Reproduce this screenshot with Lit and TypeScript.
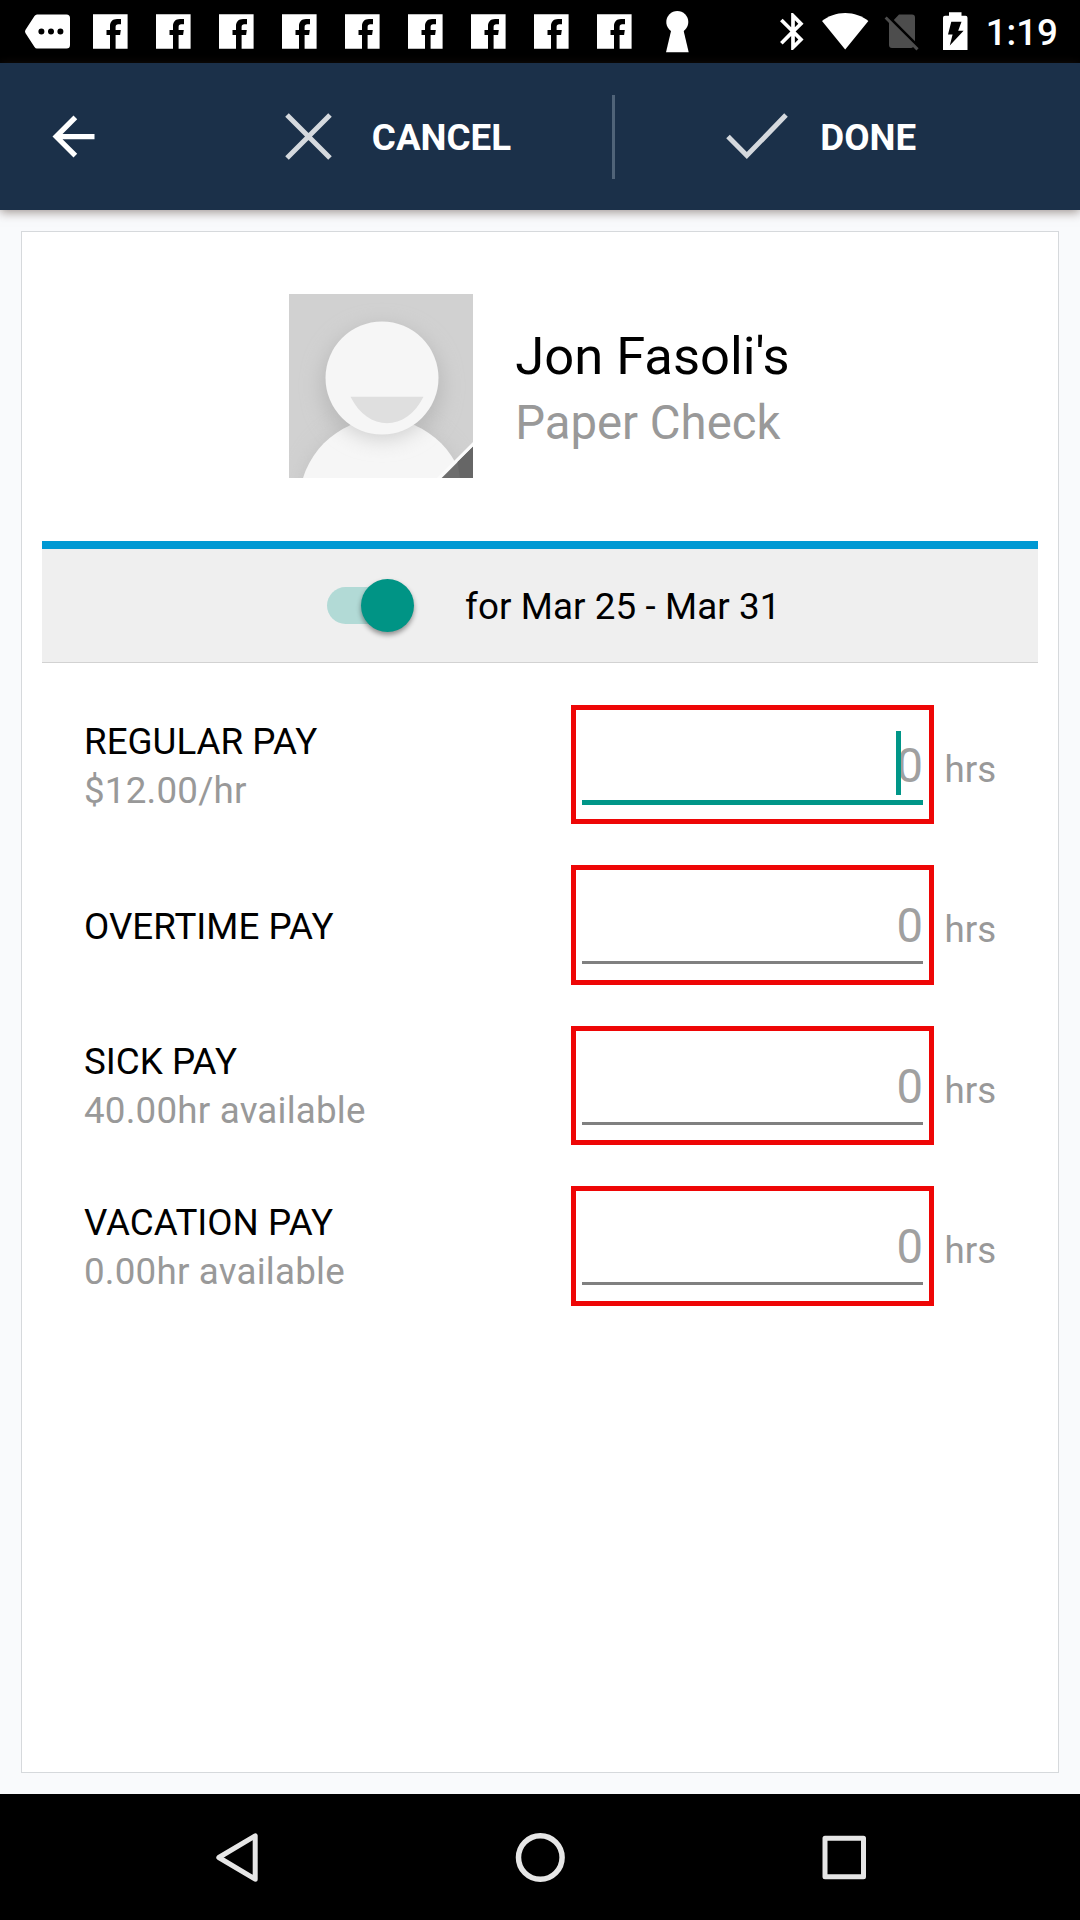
import { LitElement, html, css, svg, nothing } from "lit";
import { customElement, property } from "lit/decorators.js";

interface PayLine {
  label: string;
  note?: string;
  focused?: boolean;
}

const LINES: PayLine[] = [
  { label: "REGULAR PAY", note: "$12.00/hr", focused: true },
  { label: "OVERTIME PAY" },
  { label: "SICK PAY", note: "40.00hr available" },
  { label: "VACATION PAY", note: "0.00hr available" },
];

@customElement("status-bar")
class StatusBar extends LitElement {
  static styles = css`
    :host {
      display: flex;
      justify-content: space-between;
      height: 63px;
      background: #000;
      color: #fff;
    }
    .group {
      display: flex;
    }
    .notices {
      padding-left: 16px;
    }
    .system {
      padding-right: 22px;
    }
    svg {
      display: block;
      height: 63px;
      fill: #fff;
    }
    .time {
      margin-left: 8px;
      font: 500 36.75px/63px Roboto, sans-serif;
      padding-top: 1px;
      height: 62px;
    }
  `;

  render() {
    const social = html`<svg width="63" viewBox="0 0 63 63">
      <path
        fill-rule="evenodd"
        d="M14 14.2H48.6V48.8H36.6V35H41.1L41.8 30H36.6V27C36.6 25 37.5 24.2 39.3 24.2H42V19H38C33.5 19 31 21.8 31 26V30H27.5V35H31V48.8H14Z"
      />
    </svg>`;
    return html`
      <div class="group notices">
        <svg width="63" viewBox="16 0 63 63">
          <path
            fill-rule="evenodd"
            d="M37 14.5H66.5Q70 14.5 70 18V45Q70 48.5 66.5 48.5H37Q35.5 48.5 34.5 47L25.4 33Q24.6 31.5 25.4 30L34.5 16Q35.5 14.5 37 14.5ZM38.4 31.5a3 3 0 1 0 6 0a3 3 0 1 0-6 0ZM48 31.5a3 3 0 1 0 6 0a3 3 0 1 0-6 0ZM57.4 31.5a3 3 0 1 0 6 0a3 3 0 1 0-6 0Z"
          />
        </svg>
        ${Array.from({ length: 9 }, () => social)}
        <svg width="63" viewBox="646 0 63 63">
          <circle cx="677.3" cy="22" r="11" />
          <path d="M671.5 29H683.2L688.7 52.3H666Z" />
        </svg>
      </div>
      <div class="group system">
        <svg width="48" viewBox="768 0 48 63">
          <path
            transform="translate(770.8 9.4) scale(1.85)"
            d="M17.71 7.71L12 2h-1v7.59L6.41 5 5 6.41 10.59 12 5 17.59 6.41 19 11 14.41V22h1l5.71-5.71-4.3-4.29 4.3-4.29zM13 5.83l1.88 1.88L13 9.59V5.83zm1.88 10.46L13 18.17v-3.76l1.88 1.88z"
          />
        </svg>
        <svg width="60" viewBox="816 0 60 63">
          <path d="M822 21C828 16 836.5 13 845.2 13S862.5 16 868.4 21L845.2 49.5Z" />
        </svg>
        <svg width="56" viewBox="876 0 56 63">
          <path
            fill="#4d4d4d"
            d="M899 14.5H912Q915 14.5 915 17.5V41.3L893.8 20Z"
          />
          <path
            fill="#4d4d4d"
            d="M886.7 16.5L918.6 48.3L916.5 50.4L913 47Q912.5 48 911 48H892Q889 48 889 45V23L884.6 18.6Z"
          />
        </svg>
        <svg width="46" viewBox="932 0 46 63">
          <path
            fill-rule="evenodd"
            d="M949 12.3H961.5V15.8H965.5Q967.5 15.8 967.5 17.8V50H943V17.8Q943 15.8 945 15.8H949ZM951.3 21.8H961.5L958.2 30.8H963.6L949.8 45.5L952.6 34.6H948Z"
          />
        </svg>
        <div class="time">1:19</div>
      </div>
    `;
  }
}

@customElement("action-bar")
class ActionBar extends LitElement {
  static styles = css`
    :host {
      display: flex;
      align-items: center;
      height: 147px;
      padding-left: 42px;
      box-sizing: border-box;
      background: #1b3049;
      color: #fff;
      box-shadow: 0 2px 10px rgba(60, 40, 30, 0.5);
      z-index: 1;
    }
    svg {
      display: block;
      flex: none;
    }
    .action {
      display: flex;
      align-items: center;
      justify-content: center;
      font: 700 36.75px/44px Roboto, sans-serif;
    }
    .cancel {
      width: 428px;
      margin-left: 79px;
      gap: 40px;
    }
    .done {
      width: 412px;
      gap: 32.5px;
    }
    .label {
      padding-top: 3px;
    }
    .rule {
      width: 3px;
      height: 84px;
      background: #506378;
    }
  `;

  render() {
    return html`
      <svg width="63" height="63" viewBox="0 0 24 24" fill="#fff">
        <path d="M20 11H7.83l5.59-5.59L12 4l-8 8 8 8 1.41-1.41L7.83 13H20v-2z" />
      </svg>
      <div class="action cancel">
        <svg width="47" height="47" viewBox="0 0 47 47" stroke="#d5d9de" stroke-width="5">
          <path d="M2 2L45 45M45 2L2 45" />
        </svg>
        <span class="label">CANCEL</span>
      </div>
      <div class="rule"></div>
      <div class="action done">
        <svg width="62" height="47" viewBox="0 0 62 47" stroke="#d5d9de" stroke-width="5" fill="none">
          <path d="M2 23.5L20.8 42.5L60 2" />
        </svg>
        <span class="label">DONE</span>
      </div>
    `;
  }
}

@customElement("payee-header")
class PayeeHeader extends LitElement {
  static styles = css`
    :host {
      display: flex;
      align-items: center;
      justify-content: center;
      gap: 42px;
      height: 308px;
      padding: 0 1px 1px 0;
      font-family: Roboto, sans-serif;
    }
    svg {
      display: block;
    }
    .text {
      display: flex;
      flex-direction: column;
      gap: 8.5px;
      padding-top: 5px;
    }
    .name {
      font-size: 52.5px;
      line-height: 61.5px;
      color: #000;
    }
    .kind {
      font-size: 47.25px;
      line-height: 55.5px;
      color: #999;
    }
  `;

  render() {
    return html`
      <svg width="184" height="184" viewBox="0 0 184 184">
        <defs>
          <filter id="soft" x="-30%" y="-30%" width="160%" height="160%">
            <feGaussianBlur stdDeviation="10" />
          </filter>
          <clipPath id="body"><circle cx="93.5" cy="208" r="83" /></clipPath>
          <clipPath id="frame"><rect width="184" height="184" /></clipPath>
        </defs>
        <g clip-path="url(#frame)">
          <rect width="184" height="184" fill="#d1d1d1" />
          <circle cx="93" cy="92" r="60" fill="#bababa" filter="url(#soft)" />
          <circle cx="93.5" cy="208" r="84" fill="#b8b8b8" opacity=".5" filter="url(#soft)" />
          <circle cx="93.5" cy="208" r="83" fill="#f6f6f6" />
          <g clip-path="url(#body)">
            <circle cx="93" cy="88" r="57" fill="#cfcfcf" filter="url(#soft)" />
          </g>
          <circle cx="93" cy="84" r="56.5" fill="#f6f6f6" />
          <path d="M61.5 102.8H134.5C126 120 112 129.3 98 129.3S70 120 61.5 102.8Z" fill="#dfdfdf" />
          <path d="M184 148L148 184H184Z" fill="#fbfbfb" />
          <path d="M184 152.7L152.7 184H184Z" fill="#6e6e6e" />
          <path d="M184 152.7L168.5 168L171 184H184Z" fill="#666" />
        </g>
      </svg>
      <div class="text">
        <div class="name">Jon Fasoli's</div>
        <div class="kind">Paper Check</div>
      </div>
    `;
  }
}

@customElement("period-toggle")
class PeriodToggle extends LitElement {
  static styles = css`
    :host {
      display: flex;
      align-items: center;
      height: 122px;
      box-sizing: border-box;
      margin: 0 20px;
      padding-left: 285px;
      border-top: 8px solid #0099d3;
      border-bottom: 1px solid #d2d2d2;
      background: #efefef;
      font: 36.75px/44px Roboto, sans-serif;
      color: #000;
    }
    .track {
      display: flex;
      align-items: center;
      justify-content: flex-end;
      width: 87px;
      height: 37px;
      border-radius: 19px;
      background: linear-gradient(90deg, #b2dad6 60px, transparent 60px);
    }
    .thumb {
      flex: none;
      width: 53px;
      height: 53px;
      border-radius: 50%;
      background: #009485;
      box-shadow: 0 3px 5px rgba(0, 0, 0, 0.4);
    }
    .text {
      margin-left: 51px;
      padding-top: 3px;
      letter-spacing: 0.1px;
    }
  `;

  render() {
    return html`
      <div class="track"><div class="thumb"></div></div>
      <div class="text">for Mar 25 - Mar 31</div>
    `;
  }
}

@customElement("pay-row")
class PayRow extends LitElement {
  @property({ attribute: false }) line!: PayLine;

  static styles = css`
    :host {
      display: flex;
      height: 119.4px;
      font: 36.75px/49px Roboto, sans-serif;
      color: #999;
    }
    .labels {
      display: flex;
      flex-direction: column;
      justify-content: center;
      width: 487px;
      padding-top: 2px;
      box-sizing: border-box;
    }
    .label {
      color: #000;
    }
    .note {
      letter-spacing: 0.2px;
    }
    .field {
      position: relative;
      width: 363px;
      box-sizing: border-box;
      border: 5px solid #ee0606;
      padding: 22px 6px 0;
    }
    .value {
      font-size: 47.25px;
      line-height: 68px;
      text-align: right;
      color: #a0a0a0;
    }
    .underline {
      height: 3px;
      margin-top: 1px;
      background: #808080;
    }
    .underline.focused {
      height: 5px;
      margin-top: 0;
      background: #009688;
    }
    .caret {
      position: absolute;
      right: 28px;
      top: 21px;
      width: 5px;
      height: 64px;
      background: #009688;
    }
    .unit {
      margin: 43px 0 0 10.5px;
      line-height: 43px;
    }
  `;

  render() {
    const { label, note, focused } = this.line;
    return html`
      <div class="labels">
        <div class="label">${label}</div>
        ${note ? html`<div class="note">${note}</div>` : nothing}
      </div>
      <div class="field">
        ${focused ? html`<div class="caret"></div>` : nothing}
        <div class="value">0</div>
        <div class="underline ${focused ? "focused" : ""}"></div>
      </div>
      <div class="unit">hrs</div>
    `;
  }
}

@customElement("nav-bar")
class NavBar extends LitElement {
  static styles = css`
    :host {
      display: grid;
      grid-template-columns: repeat(3, 303.5px);
      justify-content: center;
      align-items: center;
      justify-items: center;
      height: 126px;
      background: #000;
    }
    svg {
      display: block;
      fill: none;
      stroke: #e6e6e6;
      stroke-width: 5;
      stroke-linejoin: round;
    }
  `;

  render() {
    const shapes = [
      svg`<path d="M11.8 30.5L48.2 8.8V52.2Z" />`,
      svg`<circle cx="30.3" cy="30.5" r="21.8" stroke-width="5.5" />`,
      svg`<rect x="11" y="11.2" width="38.5" height="38.5" />`,
    ];
    return shapes.map(
      (shape) => html`<svg width="60" height="60" viewBox="0 0 60 60">${shape}</svg>`
    );
  }
}

@customElement("app-root")
class AppRoot extends LitElement {
  static styles = css`
    :host {
      display: flex;
      flex-direction: column;
      width: 1080px;
      height: 1920px;
      overflow: hidden;
      background: #f9fafc;
    }
    .page {
      flex: 1;
      display: flex;
      padding: 21px;
    }
    .card {
      flex: 1;
      border: 1px solid #d6d9dc;
      background: #fff;
    }
    .rows {
      display: flex;
      flex-direction: column;
      gap: 41px;
      padding: 42px 0 0 62px;
    }
  `;

  render() {
    return html`
      <status-bar></status-bar>
      <action-bar></action-bar>
      <div class="page">
        <div class="card">
          <payee-header></payee-header>
          <period-toggle></period-toggle>
          <div class="rows">
            ${LINES.map((line) => html`<pay-row .line=${line}></pay-row>`)}
          </div>
        </div>
      </div>
      <nav-bar></nav-bar>
    `;
  }
}
